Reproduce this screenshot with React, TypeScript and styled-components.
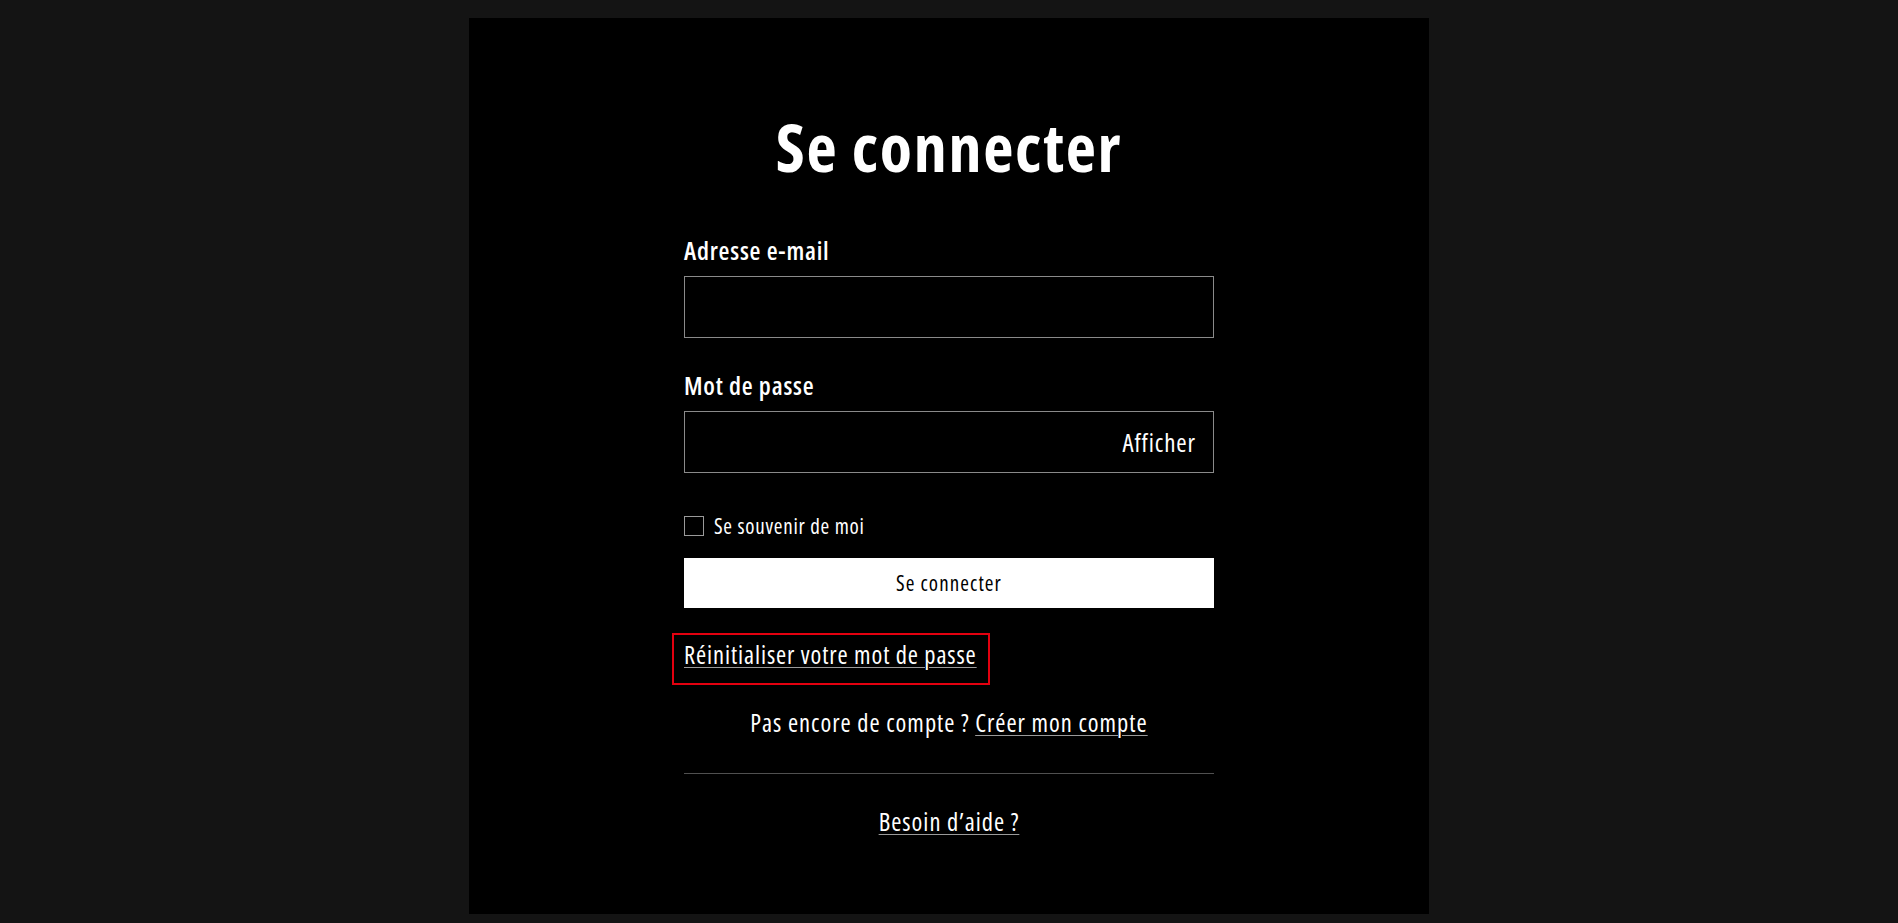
import React from "react";
import styled, { createGlobalStyle } from "styled-components";

const GlobalStyle = createGlobalStyle`
  html, body {
    margin: 0;
    padding: 0;
    background: #141414;
  }
  body {
    font-family: "Open Sans", "Liberation Sans", Arial, sans-serif;
    font-stretch: 75%;
    letter-spacing: 0.9px;
    color: #fff;
  }
  * {
    box-sizing: border-box;
  }
`;

const Page = styled.div`
  padding: 18px 0 9px;
`;

const Card = styled.main`
  width: 960px;
  height: 896px;
  margin: 0 auto;
  background: #000;
  padding-top: 88px;
  display: flex;
  flex-direction: column;
  align-items: center;
`;

const Title = styled.h1`
  margin: 0;
  font-size: 66px;
  line-height: 80px;
  font-weight: 700;
  letter-spacing: 1.7px;
  color: #fff;
`;

const Form = styled.form`
  width: 530px;
  margin-top: 49px;
  display: flex;
  flex-direction: column;
`;

const Label = styled.label<{ $gap?: number }>`
  display: block;
  font-size: 25px;
  line-height: 30px;
  font-weight: 600;
  letter-spacing: 0.8px;
  margin-top: ${(p) => p.$gap ?? 0}px;
  margin-bottom: 11px;
`;

const InputBox = styled.div`
  display: flex;
  align-items: center;
  height: 62px;
  border: 1px solid #8a8a8a;
  background: #000;
`;

const Input = styled.input`
  flex: 1;
  min-width: 0;
  height: 100%;
  border: none;
  outline: none;
  background: transparent;
  color: #fff;
  font: inherit;
  font-size: 24px;
  padding: 0 18px;
`;

const ShowButton = styled.button`
  border: none;
  background: none;
  color: #fff;
  font: inherit;
  font-size: 25px;
  letter-spacing: 0.9px;
  padding: 0 17px 0 0;
  cursor: pointer;
`;

const CheckRow = styled.label`
  display: flex;
  align-items: center;
  gap: 10px;
  margin-top: 41px;
  font-size: 21px;
  line-height: 24px;
  letter-spacing: 0.75px;
`;

const Box = styled.span`
  width: 20px;
  height: 20px;
  border: 1px solid #9a9a9a;
`;

const Submit = styled.button`
  margin-top: 20px;
  height: 50px;
  border: none;
  background: #fff;
  color: #000;
  font: inherit;
  font-size: 21px;
  letter-spacing: 1.1px;
  cursor: pointer;
`;

const Link = styled.a`
  color: #fff;
  text-decoration: underline;
  text-decoration-color: #9a9a9a;
  text-decoration-thickness: 1px;
  text-underline-offset: 3px;
  cursor: pointer;
`;

const ResetLink = styled(Link)`
  align-self: flex-start;
  margin: 26.5px 0 -12.5px -10px;
  padding: 5.5px 11px 12.5px 10px;
  font-size: 24.5px;
  line-height: 30px;
  outline: 2px solid #e3000f;
`;

const Centered = styled.p<{ $gap: number }>`
  margin: ${(p) => p.$gap}px 0 0;
  text-align: center;
  font-size: 24.5px;
  line-height: 30px;
  letter-spacing: 1px;
`;

const Divider = styled.hr`
  width: 100%;
  margin: 35px 0 0;
  border: none;
  border-top: 1px solid #505050;
`;

export default function App() {
  return (
    <>
      <GlobalStyle />
      <Page>
        <Card>
          <Title>Se connecter</Title>
          <Form onSubmit={(e) => e.preventDefault()}>
            <Label htmlFor="email">Adresse e-mail</Label>
            <InputBox>
              <Input id="email" type="email" />
            </InputBox>
            <Label htmlFor="password" $gap={32}>
              Mot de passe
            </Label>
            <InputBox>
              <Input id="password" type="password" />
              <ShowButton type="button">Afficher</ShowButton>
            </InputBox>
            <CheckRow>
              <Box />
              Se souvenir de moi
            </CheckRow>
            <Submit type="submit">Se connecter</Submit>
            <ResetLink>Réinitialiser votre mot de passe</ResetLink>
            <Centered $gap={38}>
              Pas encore de compte ? <Link>Créer mon compte</Link>
            </Centered>
            <Divider />
            <Centered $gap={33}>
              <Link>Besoin d’aide ?</Link>
            </Centered>
          </Form>
        </Card>
      </Page>
    </>
  );
}
